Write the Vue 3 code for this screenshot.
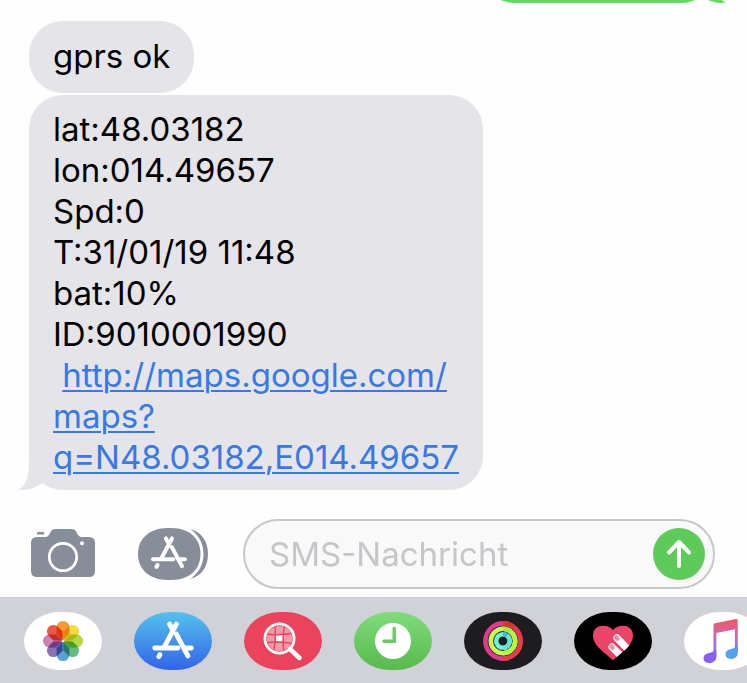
<template>
  <div class="screen">
    <main class="thread">
      <div class="sent-row">
        <div class="bubble bubble-sent">
          <svg class="tail tail-right" viewBox="0 0 24 34" aria-hidden="true">
            <path d="M11 0C11 20 9 30 0 33.5C10 35 18 32 24 27V0Z" fill="#63d962"/>
          </svg>
        </div>
      </div>

      <div class="bubble">{{ reply }}</div>
      <div class="bubble bubble-report">
        <div v-for="line in report" :key="line">{{ line }}</div>
        <div class="link-line">{{ ' ' }}<a :href="mapUrl"><template v-for="(part, i) in urlParts" :key="part"><br v-if="i > 0">{{ part }}</template></a></div>
        <svg class="tail" viewBox="0 0 24 34" aria-hidden="true">
          <path d="M11 0C11 20 9 30 0 33.5C10 35 18 32 24 27V0Z" fill="#e5e4e9"/>
        </svg>
      </div>
    </main>

    <form class="composer" @submit.prevent="send">
      <button type="button" class="icon-btn" aria-label="Kamera">
        <svg width="64" height="50" viewBox="0 0 64 50">
          <path d="M6 4.2Q6 3 7.2 3H12Q13.2 3 13.2 4.2V5.6H6Z" fill="#878e9a"/>
          <path d="M6 8H14C17 8 18 6.5 19.2 3.8C20.5 1 22 0 25 0H40C43 0 44.5 1 45.8 3.8C47 6.5 48 8 51 8H58Q64 8 64 14V42Q64 48 58 48H6Q0 48 0 42V14Q0 8 6 8Z" fill="#878e9a"/>
          <circle cx="32" cy="28" r="13.7" fill="none" stroke="#fff" stroke-width="2.7"/>
          <circle cx="51" cy="14.2" r="2" fill="#fff"/>
        </svg>
      </button>
      <button type="button" class="icon-btn" aria-label="Apps">
        <svg width="70" height="52" viewBox="0 0 70 52">
          <path d="M52 1C64 4 70 14 70 26S64 48 52 51C60 46 65.5 37 65.5 26S60 6 52 1Z" fill="#878e9a"/>
          <path d="M30 0H33C52 0 62.5 11 62.5 26S52 52 33 52H30C11 52 0 41 0 26S11 0 30 0Z" fill="#878e9a"/>
          <g transform="translate(-3 0) scale(.87)" fill="none" stroke="#fff" stroke-width="4.6" stroke-linecap="round">
            <path v-for="d in storeStrokes" :key="d" :d="d"/>
          </g>
        </svg>
      </button>
      <div class="field">
        <input v-model="draft" type="text" placeholder="SMS-Nachricht" aria-label="SMS-Nachricht">
        <button type="submit" class="send-btn" aria-label="Senden">
          <svg width="52" height="52" viewBox="0 0 52 52">
            <path d="M26 38V14M16 24.5L26 14L36 24.5" fill="none" stroke="#fff" stroke-width="4" stroke-linecap="round" stroke-linejoin="round"/>
          </svg>
        </button>
      </div>
    </form>

    <nav class="tray" aria-label="Apps">
      <button class="app app-white" aria-label="Fotos">
        <svg viewBox="0 0 78 58">
          <g class="petals">
            <path v-for="(color, i) in petals" :key="color" d="M39 28.5L32.6 22V15.4A6.4 6.4 0 0 1 45.4 15.4V22Z" :fill="color" :transform="`rotate(${i * 45} 39 29)`"/>
          </g>
          <circle cx="39" cy="29" r="1.3" fill="#fff"/>
        </svg>
      </button>

      <button class="app app-store" aria-label="App Store">
        <svg viewBox="0 0 78 58">
          <g fill="none" stroke="#fff" stroke-width="4.8" stroke-linecap="round">
            <path v-for="d in storeStrokes" :key="d" :d="d"/>
          </g>
        </svg>
      </button>

      <button class="app app-search" aria-label="Bilder">
        <svg viewBox="0 0 78 58">
          <defs>
            <clipPath id="lens"><circle cx="35.5" cy="26.5" r="12.6"/></clipPath>
          </defs>
          <path d="M46 37L55.5 46" stroke="#fff" stroke-width="4.6" stroke-linecap="round"/>
          <g clip-path="url(#lens)">
            <rect x="22" y="13" width="27" height="27" fill="#f79aa8"/>
            <path d="M32 23.3L39 22.7L38.5 29.5L31.5 29.5Z" fill="#fff"/>
            <path d="M22 22Q36 24 49 21M22 30.8Q36 28.8 49 31.5M30.5 12Q33 26 29 41M40.5 12Q38 27 40 41" fill="none" stroke="#eb435c" stroke-width="1.4"/>
          </g>
          <circle cx="35.5" cy="26.5" r="14.6" fill="none" stroke="#fff" stroke-width="2.8"/>
        </svg>
      </button>

      <button class="app app-clock" aria-label="Zuletzt">
        <svg viewBox="0 0 78 58">
          <circle cx="39" cy="29" r="18" fill="#fff"/>
          <path d="M40.2 16.5V29.3H30" fill="none" stroke="#6bca62" stroke-width="3.4" stroke-linecap="round" stroke-linejoin="miter"/>
        </svg>
      </button>

      <button class="app app-activity" aria-label="Aktivität">
        <svg viewBox="0 0 78 58" fill="none">
          <g v-for="ring in rings" :key="ring.r" stroke-width="4.6">
            <circle cx="39" cy="29" :r="ring.r" :stroke="ring.color"/>
            <path :d="`M39 ${29 - ring.r}A${ring.r} ${ring.r} 0 0 1 39 ${29 + ring.r}`" :stroke="ring.end"/>
            <path :d="`M39 ${29 - ring.r}A${ring.r} ${ring.r} 0 0 1 ${39 + ring.r * 0.6} ${29 - ring.r * 0.8}`" :stroke="ring.start"/>
          </g>
        </svg>
      </button>

      <button class="app app-touch" aria-label="Digital Touch">
        <svg viewBox="0 0 78 58">
          <defs>
            <clipPath id="heart"><path :d="heart"/></clipPath>
          </defs>
          <path :d="heart" fill="#ec4468"/>
          <g clip-path="url(#heart)" stroke-linecap="round">
            <path d="M43 26L60 43.5M38 35L53 50" stroke="#d63a5c" stroke-width="8.6"/>
            <path d="M43 26L60 43.5M38 35L53 50" stroke="#fff" stroke-width="7.4"/>
            <path d="M42.2 25.4L43.4 26.6M37.2 34.4L38.4 35.6" stroke="#f291a6" stroke-width="4.6"/>
          </g>
        </svg>
      </button>

      <button class="app app-white" aria-label="Musik">
        <svg viewBox="0 0 78 58">
          <defs>
            <linearGradient id="stems" gradientUnits="userSpaceOnUse" x1="0" y1="8" x2="0" y2="50">
              <stop offset="0" stop-color="#f2566a"/>
              <stop offset=".3" stop-color="#d0669f"/>
              <stop offset=".65" stop-color="#8d78e0"/>
              <stop offset="1" stop-color="#7f5df5"/>
            </linearGradient>
            <linearGradient id="notes" gradientUnits="userSpaceOnUse" x1="19" y1="0" x2="54" y2="0">
              <stop offset="0" stop-color="#8660f5"/>
              <stop offset=".4" stop-color="#8660f5"/>
              <stop offset=".65" stop-color="#58a5f3"/>
              <stop offset="1" stop-color="#519cf5"/>
            </linearGradient>
          </defs>
          <path d="M29.5 13Q29.5 11.5 31 11.2L52 7Q53.7 6.7 53.7 8.5V40H51V17.3L32.3 21V45H29.5Z" fill="url(#stems)"/>
          <path d="M32.3 39V45C32.3 49 28.5 51 25 51C21.500 51 19.5 49 19.5 46.3C19.5 43.5 21.5 41.5 25 41C28.5 40.5 29.5 40 29.5 38ZM53.7 34V41C53.7 45 50 47 46.7 47C43.5 47 41.5 45 41.5 42.3C41.5 39.5 43.5 37.5 47 37C50 36.5 51 36 51 34Z" fill="url(#notes)"/>
        </svg>
      </button>
    </nav>
  </div>
</template>

<script setup>
import { ref } from 'vue'

const draft = ref('')

const reply = 'gprs ok'

const report = [
  'lat:48.03182',
  'lon:014.49657',
  'Spd:0',
  'T:31/01/19 11:48',
  'bat:10%',
  'ID:9010001990'
]

// The address wraps after the host and after the question mark
const urlParts = ['http://maps.google.com/', 'maps?', 'q=N48.03182,E014.49657']
const mapUrl = urlParts.join('')

const send = () => {
  draft.value = ''
}

const storeStrokes = [
  'M42.5 12L30 35.5',
  'M35.5 12L38 16.5',
  'M42.3 22L54 44',
  'M20.7 36H44',
  'M52 36H57.3',
  'M26 42.5L24.7 44.7'
]

const petals = ['#f49b33', '#f0dc3a', '#b8d649', '#62bd82', '#5d9fd8', '#8a72b5', '#cf82b4', '#ea5844']

const rings = [
  { r: 17.6, color: '#df3a8f', end: '#e73a4a', start: '#d93434' },
  { r: 12.2, color: '#c8fb50', end: '#b7f545', start: '#a5e840' },
  { r: 6.8, color: '#6ff0d8', end: '#66e2df', start: '#4bb6d3' }
]

const heart = 'M39 48.5C34 42.5 19 35 19 23.5C19 17 23.5 13.7 29 13.7C33.5 13.7 37 15.5 39 18C41 15.5 44.5 13.7 49 13.7C54.5 13.7 59 17 59 23.5C59 35 44 42.5 39 48.5Z'
</script>

<style>
body {
  margin: 0;
  background: #fefefe;
}
</style>

<style scoped>
.screen {
  display: flex;
  flex-direction: column;
  min-height: 100vh;
  overflow: hidden;
  font-family: Inter, "Liberation Sans", sans-serif;
  color: #000;
}

button {
  padding: 0;
  border: none;
  background: none;
  cursor: pointer;
}

svg {
  display: block;
}

.thread {
  flex: 1;
  display: flex;
  flex-direction: column;
  align-items: flex-start;
  gap: 2px;
  padding: 0 29px 28px;
}

/* Only the lower edge of the last sent message is scrolled into view */
.sent-row {
  display: flex;
  align-items: flex-end;
  justify-content: flex-end;
  align-self: stretch;
  height: 3px;
  margin: 0 -11px 16px;
  padding-right: 14px;
  overflow: hidden;
}

.bubble {
  position: relative;
  box-sizing: border-box;
  padding: 15px 24px 16px;
  border-radius: 34px;
  background: #e5e4e9;
  font-size: 33px;
  line-height: 41px;
}

.bubble-report {
  padding: 14px 24px 12px;
}

.bubble-sent {
  flex: none;
  width: 234px;
  height: 72px;
  background: #63d962;
}

.link-line {
  white-space: pre-wrap;
}

.link-line a {
  color: #3679e8;
  text-decoration: underline;
  text-decoration-thickness: 2px;
  text-underline-offset: 3px;
}

.tail {
  position: absolute;
  left: -11px;
  bottom: 0;
  width: 24px;
  height: 34px;
}

.tail-right {
  left: auto;
  right: -11px;
  transform: scaleX(-1);
}

.composer {
  display: flex;
  align-items: center;
  padding: 0 32px 8px 31px;
}

.icon-btn {
  flex: none;
  margin-right: 43px;
}

.icon-btn + .icon-btn {
  margin-right: 35px;
}

.field {
  flex: 1;
  display: flex;
  align-items: center;
  box-sizing: border-box;
  height: 70px;
  min-width: 0;
  padding: 0 8px 0 24px;
  border: 2px solid #c7c6cb;
  border-radius: 35px;
  background: #f9f9f9;
}

.field input {
  flex: 1;
  min-width: 0;
  padding: 0;
  border: none;
  outline: none;
  background: transparent;
  font: inherit;
  font-size: 33px;
  line-height: 41px;
}

.field input::placeholder {
  color: #c6c6ca;
  opacity: 1;
}

.send-btn {
  flex: none;
  border-radius: 50%;
  background: #5eca5a;
}

.tray {
  display: flex;
  gap: 32px;
  padding: 15px 0 13px 24px;
  overflow: hidden;
  background: #d1d2d8;
}

.app {
  flex: none;
  width: 78px;
  height: 58px;
  border-radius: 36px / 29px;
  overflow: hidden;
}

.app-white {
  background: #fff;
}

.app-store {
  background: linear-gradient(#54c1ee, #3264e8);
}

.app-search {
  background: #eb435c;
}

.app-clock {
  background: linear-gradient(#80dc7c, #58b94c);
}

.app-activity {
  background: #1d1d20;
}

.app-touch {
  background: #000;
}

.petals {
  isolation: isolate;
}

.petals path {
  mix-blend-mode: multiply;
}
</style>
